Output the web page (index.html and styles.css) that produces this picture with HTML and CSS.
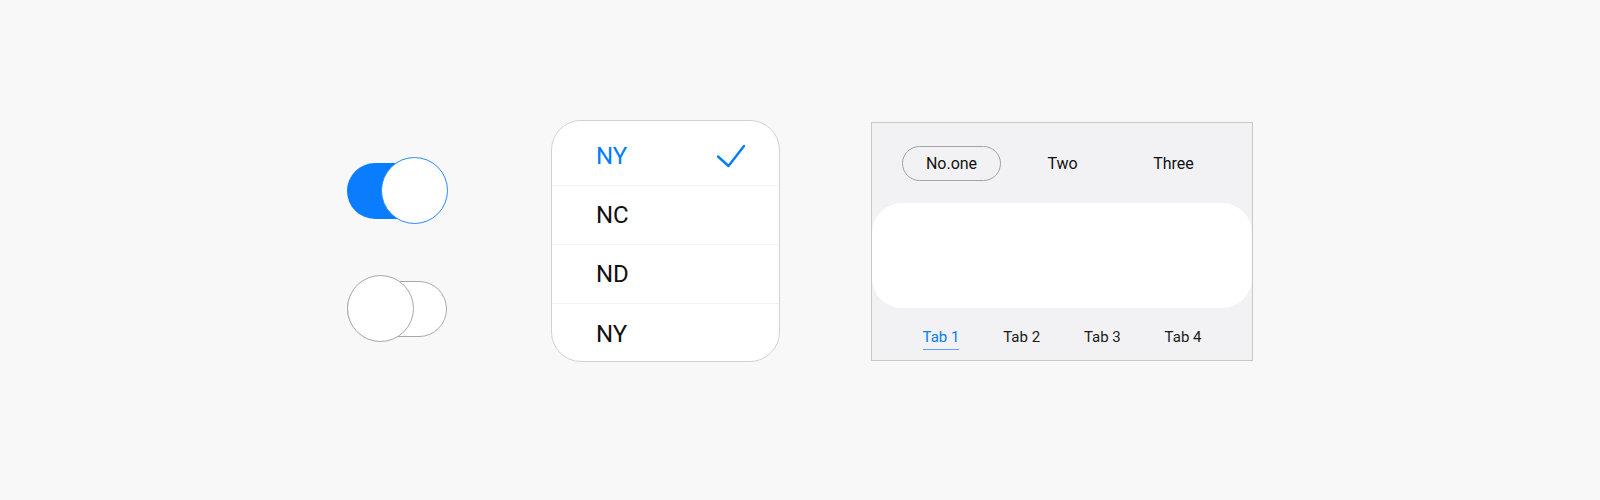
FILE: index.html
```html
<!DOCTYPE html>
<html>
<head>
<meta charset="utf-8">
<link rel="stylesheet" href="styles.css">
</head>
<body>
<main class="stage">
  <section class="toggles">
    <div class="toggle on">
      <span class="track"></span>
      <span class="knob"></span>
    </div>
    <div class="toggle off">
      <span class="track"></span>
      <span class="knob"></span>
    </div>
  </section>

  <section class="menu">
    <div class="menu-row selected">
      <span>NY</span>
      <svg class="check" width="28" height="24" viewBox="0 0 28 24"><path d="M1 12.5 L11.5 22 L27 2" fill="none" stroke="#007DFF" stroke-width="2.4" stroke-linecap="round" stroke-linejoin="round"/></svg>
    </div>
    <div class="menu-row"><span>NC</span></div>
    <div class="menu-row"><span>ND</span></div>
    <div class="menu-row last"><span>NY</span></div>
  </section>

  <section class="panel">
    <div class="segments">
      <div class="seg"><span class="pill">No.one</span></div>
      <div class="seg"><span class="pill plain">Two</span></div>
      <div class="seg"><span class="pill plain">Three</span></div>
    </div>
    <div class="content"></div>
    <div class="tabs">
      <div class="tab active"><span>Tab 1</span></div>
      <div class="tab"><span>Tab 2</span></div>
      <div class="tab"><span>Tab 3</span></div>
      <div class="tab"><span>Tab 4</span></div>
    </div>
  </section>
</main>
</body>
</html>
```

FILE: styles.css
```css
html, body {
  margin: 0;
  padding: 0;
  background: #f8f8f8;
  font-family: Roboto, "Noto Sans", "Liberation Sans", sans-serif;
}

.stage {
  display: flex;
  align-items: flex-start;
  padding: 120px 0 0 347px;
  height: 500px;
  box-sizing: border-box;
}

/* toggles */
.toggles {
  display: flex;
  flex-direction: column;
  gap: 51px;
  margin-top: 37px;
}
.toggle {
  position: relative;
  width: 100px;
  height: 67px;
  display: flex;
  align-items: center;
}
.track {
  display: block;
  width: 100px;
  height: 56px;
  border-radius: 28px;
  box-sizing: border-box;
}
.toggle.on .track {
  background: #0A7DFF;
}
.toggle.off .track {
  background: #fff;
  border: 1px solid #a8a8a8;
}
.knob {
  position: absolute;
  top: 0;
  width: 67px;
  height: 67px;
  border-radius: 50%;
  background: #fff;
  box-sizing: border-box;
}
.toggle.on .knob {
  left: 34px;
  border: 1px solid #2b8bff;
}
.toggle.off .knob {
  left: 0;
  border: 1px solid #a8a8a8;
}

/* dropdown menu */
.menu {
  margin-left: 104px;
  width: 229px;
  height: 242px;
  box-sizing: border-box;
  border: 1px solid #d2d2d2;
  border-radius: 30px;
  background: #fff;
  overflow: hidden;
  padding-top: 6px;
}
.menu-row {
  height: 59px;
  box-sizing: border-box;
  border-bottom: 1px solid #f2f2f2;
  display: flex;
  align-items: center;
  justify-content: space-between;
  padding: 0 34px 0 44px;
  font-size: 24px;
  color: #111;
}
.menu-row.last {
  border-bottom: none;
}
.menu-row.selected {
  color: #007DFF;
}
.check {
  display: block;
}

/* tabs panel */
.panel {
  margin-left: 91px;
  margin-top: 2px;
  width: 382px;
  height: 239px;
  box-sizing: border-box;
  border: 1px solid #c8c8c8;
  background: #f2f2f4;
  display: flex;
  flex-direction: column;
}
.segments {
  display: flex;
  padding: 23px 0 0 24px;
}
.seg {
  width: 111px;
  display: flex;
  justify-content: center;
}
.pill {
  width: 99px;
  height: 35px;
  box-sizing: border-box;
  border: 1px solid #a4a4a4;
  border-radius: 18px;
  display: flex;
  align-items: center;
  justify-content: center;
  font-size: 16px;
  color: #111;
}
.pill.plain {
  border-color: transparent;
}
.content {
  margin-top: 22px;
  height: 105px;
  background: #fff;
  border-radius: 30px;
}
.tabs {
  display: flex;
  justify-content: center;
  margin-top: 20px;
}
.tab {
  width: 80.7px;
  display: flex;
  justify-content: center;
  font-size: 15px;
  color: #1a1a1a;
}
.tab span {
  display: block;
  padding-bottom: 3px;
  border-bottom: 1px solid transparent;
  line-height: 18px;
}
.tab.active {
  color: #007DFF;
}
.tab.active span {
  border-bottom-color: #5ea2ff;
}
```
